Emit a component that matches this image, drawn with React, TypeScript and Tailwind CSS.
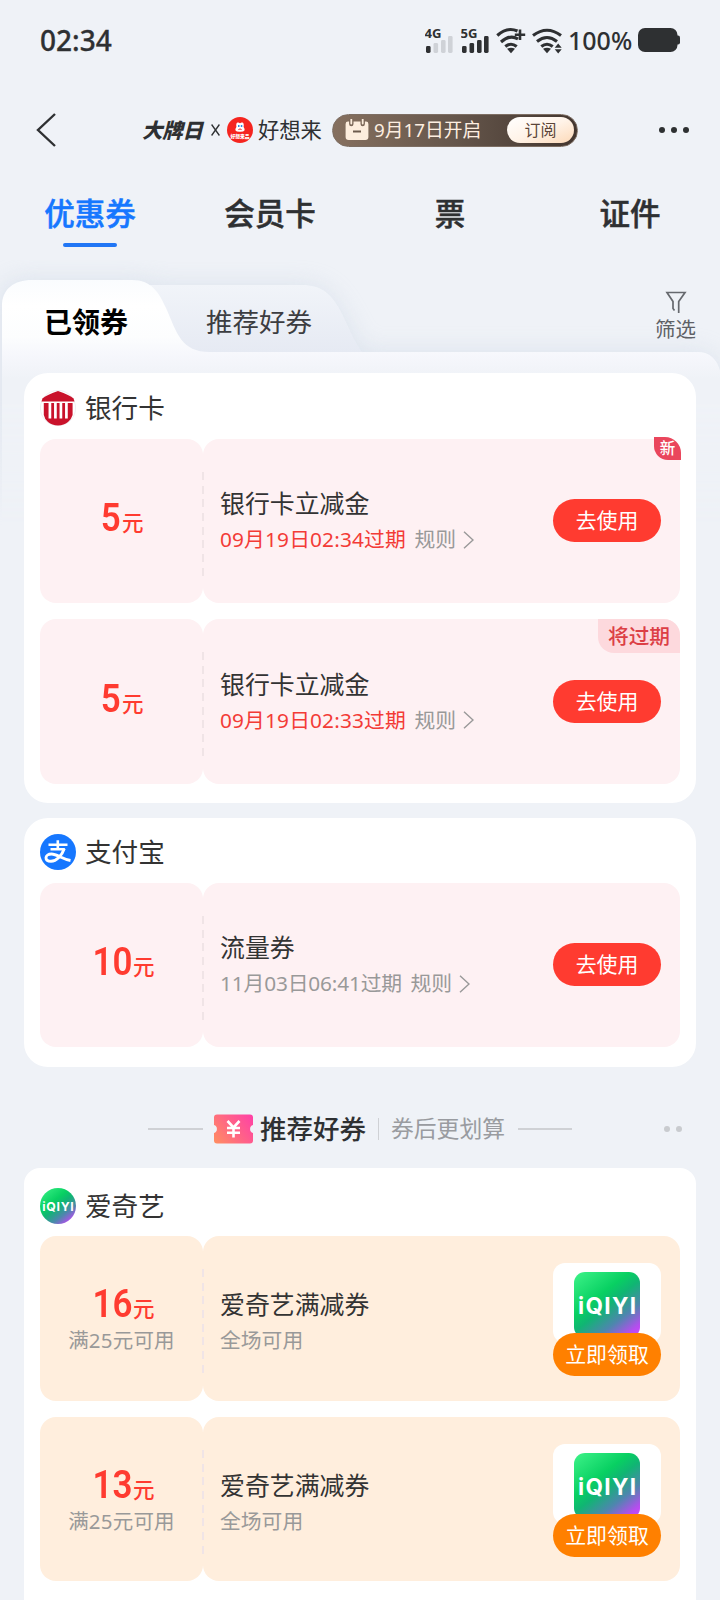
import { ReactNode } from "react";
import clsx from "clsx";

type Coupon = {
  amount: string;
  condition?: string;
  title: string;
  expire?: string;
  expireSoon?: boolean;
  scope?: string;
  tag?: "new" | "expiring";
};

const BANK_COUPONS: Coupon[] = [
  { amount: "5", title: "银行卡立减金", expire: "09月19日02:34过期", expireSoon: true, tag: "new" },
  { amount: "5", title: "银行卡立减金", expire: "09月19日02:33过期", expireSoon: true, tag: "expiring" },
];

const ALIPAY_COUPONS: Coupon[] = [
  { amount: "10", title: "流量券", expire: "11月03日06:41过期" },
];

const IQIYI_COUPONS: Coupon[] = [
  { amount: "16", condition: "满25元可用", title: "爱奇艺满减券", scope: "全场可用" },
  { amount: "13", condition: "满25元可用", title: "爱奇艺满减券", scope: "全场可用" },
];

const TABS = ["优惠券", "会员卡", "票", "证件"];

function Signal({ label, level }: { label: string; level: number }) {
  const bars = [
    { x: 1, h: 7 },
    { x: 8.5, h: 10 },
    { x: 16, h: 13 },
    { x: 23, h: 17 },
  ];
  return (
    <svg width="29" height="28" viewBox="0 0 29 28">
      <text
        x="-0.5"
        y="12"
        fontSize="12.5"
        fontWeight="700"
        textLength="17"
        lengthAdjust="spacingAndGlyphs"
        fill="#2e3032"
        fontFamily="Noto Sans, sans-serif"
      >
        {label}
      </text>
      {bars.map((b, i) => (
        <rect key={b.x} x={b.x} y={27 - b.h} width="4.6" height={b.h} rx="1.4" fill={i < level ? "#2e3032" : "#cfd2d7"} />
      ))}
    </svg>
  );
}

function Wifi({ plus }: { plus?: boolean }) {
  return (
    <svg width="30" height="28" viewBox="0 0 30 28" fill="none" stroke="#2e3032" strokeWidth="3.1">
      <path d={plus ? "M1.3 9.5 Q11 0.5 21.5 5" : "M1 9.5 Q15 -1 29 9.5"} />
      <path d={plus ? "M5 16 Q14 8 22 13" : "M5 15.5 Q15 7.5 25 15.5"} />
      <path d="M9.3 20.5 Q15 16 20.7 20.5" />
      <path d="M11 22.8 Q15 20.5 19 22.8 L15 27.2Z" fill="#2e3032" stroke="none" />
      {plus ? (
        <path d="M24 3.5v10.5M18.8 8.8h10.4" strokeWidth="2.6" />
      ) : (
        <path d="M26.2 17.5l3.5 4.2h-7zM26.2 27.5l3.5-4.2h-7z" fill="#2e3032" stroke="none" />
      )}
    </svg>
  );
}

function StatusBar() {
  return (
    <div className="flex h-20 items-center pr-[40px] pl-[40px] text-[#2e3032]">
      <span className="text-[28px] leading-none font-medium [-webkit-text-stroke:0.3px_currentColor]">02:34</span>
      <div className="ml-auto flex items-center">
        <Signal label="4G" level={1} />
        <div className="w-[7px]" />
        <Signal label="5G" level={4} />
        <div className="w-[6px]" />
        <Wifi plus />
        <div className="w-[6px]" />
        <Wifi />
        <span className="ml-[6px] w-[65px] text-[25px] leading-none font-medium">100%</span>
        <svg className="ml-[5px]" width="42" height="24" viewBox="0 0 42 24" fill="#2e3032">
          <rect width="39.5" height="24" rx="7" />
          <rect x="37" y="7.5" width="5" height="9" rx="2" />
        </svg>
      </div>
    </div>
  );
}

function BrandLogo() {
  return (
    <svg width="26" height="26" viewBox="0 0 26 26">
      <circle cx="13" cy="13" r="13" fill="#f5251f" />
      <path d="M9.4 10 Q8.6 4.8 11.5 5.5 L13 6.3 L14.5 5.5 Q17.4 4.8 16.6 10 Q20 15 13 14.8 Q6 15 9.4 10Z" fill="#fff" />
      <path d="M11 9h1.5M13.8 9h1.5" stroke="#2d8be0" strokeWidth="1.8" />
      <path d="M11.4 12.6 Q13 11.3 14.6 12.6" stroke="#f5251f" strokeWidth="1" fill="none" />
      <text x="13" y="20.6" fontSize="4.8" fontWeight="900" fill="#fff" textAnchor="middle" fontFamily="Noto Sans CJK SC, sans-serif">
        好想来品
      </text>
    </svg>
  );
}

function TitleBar() {
  return (
    <div className="flex h-[100px] items-center pl-[36px] text-[#2e3032]">
      <svg width="20" height="34" viewBox="0 0 20 34" fill="none" stroke="#2e3032" strokeWidth="2.4">
        <path d="M19 1 L2 17 L19 33" />
      </svg>
      <span className="ml-[86px] w-[63px] text-[20.5px] leading-none font-black tracking-[-0.3px] italic">大牌日</span>
      <svg className="ml-[6px]" width="9" height="12" viewBox="0 0 9 12" stroke="#2e3032" strokeWidth="1.3">
        <path d="M0.6 0.5 L8.4 11.5 M8.4 0.5 L0.6 11.5" />
      </svg>
      <div className="ml-[7px]">
        <BrandLogo />
      </div>
      <span className="ml-[5px] w-[66px] text-[21.3px] leading-none">好想来</span>
      <div className="ml-[8px] flex h-[33px] w-[246px] items-center rounded-full border border-[#7d6e63] bg-linear-to-r from-[#86705f] via-[#65564b] to-[#43362f] pr-[3px] pl-[12px]">
        <svg width="24" height="22" viewBox="0 0 24 22">
          <path d="M3 2.5h18a2.4 2.4 0 0 1 2.4 2.4V18a3 3 0 0 1-3 3H3.6a3 3 0 0 1-3-3V4.9A2.4 2.4 0 0 1 3 2.5z" fill="#fdeddd" />
          <path d="M6.3 0v5M17.7 0v5" stroke="#7b6758" strokeWidth="4.4" strokeLinecap="round" />
          <path d="M6.3 0v4.5M17.7 0v4.5" stroke="#fdeddd" strokeWidth="1.8" strokeLinecap="round" />
          <path d="M8 12.5h8" stroke="#6d5a4c" strokeWidth="2" />
        </svg>
        <span className="ml-[5px] text-[18.8px] leading-none whitespace-nowrap text-[#fdeee0]">9月17日开启</span>
        <span className="ml-auto flex h-[26px] w-[67px] items-center justify-center rounded-full bg-linear-to-br from-white via-[#fff3e8] to-[#fcd9b8] text-[16px] leading-none text-[#5b4538]">
          订阅
        </span>
      </div>
      <div className="ml-[81px] flex gap-[6px]">
        <i className="size-[6px] rounded-full bg-[#2e3032]" />
        <i className="size-[6px] rounded-full bg-[#2e3032]" />
        <i className="size-[6px] rounded-full bg-[#2e3032]" />
      </div>
    </div>
  );
}

function MainTabs() {
  return (
    <div className="grid h-20 grid-cols-4">
      {TABS.map((tab, i) => (
        <div key={tab} className="flex flex-col items-center pt-[15px]">
          <span
            className={clsx(
              "text-[30.5px] leading-[36px] font-medium [-webkit-text-stroke:0.5px_currentColor]",
              i === 0 ? "text-[#1677ff]" : "text-[#2e3032]"
            )}
          >
            {tab}
          </span>
          {i === 0 && <i className="mt-[12px] h-[3.5px] w-[54px] rounded-full bg-[#2176f5]" />}
        </div>
      ))}
    </div>
  );
}

// Folder-shaped backdrop: inactive tab behind, active tab joined to the panel.
function FolderShape() {
  return (
    <svg className="absolute top-0 left-0 -z-10" width="720" height="280" viewBox="0 0 720 280">
      <defs>
        <linearGradient id="front" x1="0" y1="20" x2="0" y2="280" gradientUnits="userSpaceOnUse">
          <stop offset="0" stopColor="#fafcfe" />
          <stop offset="0.1" stopColor="#ffffff" />
          <stop offset="0.22" stopColor="#fcfdfe" />
          <stop offset="0.29" stopColor="#f6f7fc" />
          <stop offset="0.38" stopColor="#eff2f7" />
          <stop offset="1" stopColor="#eff2f7" />
        </linearGradient>
        <linearGradient id="back" x1="0" y1="25" x2="0" y2="92" gradientUnits="userSpaceOnUse">
          <stop offset="0" stopColor="#f1f4f9" />
          <stop offset="1" stopColor="#e6eaf3" />
        </linearGradient>
        <linearGradient id="fade" x1="0" y1="0" x2="0" y2="280" gradientUnits="userSpaceOnUse">
          <stop offset="0" stopColor="#fff" />
          <stop offset="0.5" stopColor="#fff" />
          <stop offset="0.95" stopColor="#000" />
        </linearGradient>
        <mask id="bottomFade">
          <rect width="720" height="280" fill="url(#fade)" />
        </mask>
        <filter id="soft" x="-20%" y="-20%" width="140%" height="140%" colorInterpolationFilters="sRGB">
          <feGaussianBlur stdDeviation="12" />
        </filter>
      </defs>
      <g mask="url(#bottomFade)">
        <g fill="#bccadd" opacity="0.38" filter="url(#soft)">
          <path d="M0 290 V44 C0 26 12 20 28 20 H132 C150 20 155 25 158 25 H300 C325 25 332 38 342 54 L362 92 H696 C712 94 720 104 722 118 V290Z" />
        </g>
        <path d="M140 92 V25 H302 C322 25 331 34 340 50 C348 65 353 80 362 92Z" fill="url(#back)" />
        <path
          d="M2 290 V46 C2 29 14 20 32 20 H132 C152 20 159 33 166 48 C177 73 181 92 210 92 H698 C711 92 719 101 721 116 V290Z"
          fill="url(#front)"
        />
      </g>
    </svg>
  );
}

function SubTabs() {
  return (
    <div className="relative z-0 flex h-[113px]">
      <FolderShape />
      <span className="mt-[44px] ml-[44px] w-[90px] text-[28px] leading-[36px] font-bold text-black">已领券</span>
      <span className="mt-[43.5px] ml-[72px] text-[26.5px] leading-[36px] text-[#3c3d41]">推荐好券</span>
      <div className="mt-[31px] mr-[24px] ml-auto flex flex-col items-center text-[#5e6166]">
        <svg width="22" height="23" viewBox="0 0 22 23" fill="none" stroke="#66696e" strokeWidth="1.7">
          <path d="M9.5 19.5 L8 17.5 V10.5 L2 1.5 H20 L13.7 10.5 V22" />
        </svg>
        <span className="mt-[2px] text-[20.5px] leading-[26px]">筛选</span>
      </div>
    </div>
  );
}

function BankIcon() {
  return (
    <svg width="36" height="36" viewBox="0 0 36 36">
      <circle cx="18" cy="18" r="17.6" fill="#fff" stroke="#e8eaec" strokeWidth="0.7" />
      <path d="M18 1 Q30 5 33.5 8.5 L34.5 11.5 H1.5 L2.5 8.5 Q6 5 18 1Z" fill="#c9122b" />
      <path d="M3.8 13 H32.6 V25 Q31.500 29 28 32 Q24 35.400 18 35.400 Q12 35.400 8 32 Q4.500 29 3.800 25Z" fill="#c9122b" />
      <path d="M9.900 12v16.500M15.400 12v16.500M20.900 12v16.500M26.400 12v16.500" stroke="#fff" strokeWidth="2.700" />
    </svg>
  );
}

function AlipayIcon() {
  return (
    <svg width="36" height="36" viewBox="0 0 36 36" fill="none">
      <circle cx="18" cy="18" r="18" fill="#1677ff" />
      <g stroke="#fff" strokeWidth="2.6">
        <path d="M8.5 10.7h19M17.8 6.2v9M10.5 15.3h14.3" />
        <path d="M24.3 14.5 C22 21.5 16.5 27.3 11 27.3 C7.8 27.3 6 25.8 6 23.8 C6 21.6 8.3 20 11.5 20 C17 20 22 25 30.5 26.5" strokeWidth="2.9" />
      </g>
    </svg>
  );
}

function IqiyiLogo({ id, size, round }: { id: string; size: number; round?: boolean }) {
  return (
    <svg width={size} height={size} viewBox="0 0 66 66">
      <defs>
        <linearGradient id={id} x1="8" y1="0" x2="60" y2="66" gradientUnits="userSpaceOnUse">
          <stop offset="0" stopColor="#36ee83" />
          <stop offset="0.35" stopColor="#08d062" />
          <stop offset="0.5" stopColor="#10b573" />
          <stop offset="0.72" stopColor="#4e86ae" />
          <stop offset="0.92" stopColor="#b84cf0" />
          <stop offset="1" stopColor="#c648fa" />
        </linearGradient>
      </defs>
      <rect width="66" height="66" rx={round ? 33 : 11} fill={`url(#${id})`} />
      <text
        x="4"
        y="41.5"
        fontSize="22.5"
        fontWeight="700"
        textLength="58"
        lengthAdjust="spacing"
        fill="#fff"
        fontFamily="Inter, sans-serif"
      >
        iQIYI
      </text>
    </svg>
  );
}

function Chevron() {
  return (
    <svg width="11" height="18" viewBox="0 0 11 18" fill="none" stroke="#999" strokeWidth="1.4">
      <path d="M1 0.7 L10 9 L1 17.3" />
    </svg>
  );
}

function CouponTag({ tag }: { tag: Coupon["tag"] }) {
  if (tag === "new") {
    return (
      <span className="absolute -top-[1.5px] -right-[1px] flex h-[23px] w-[27px] items-center justify-center rounded-tr-[16px] rounded-bl-[14px] bg-[#ea465c] text-[15.5px] leading-none font-medium text-white">
        新
      </span>
    );
  }
  if (tag === "expiring") {
    return (
      <span className="absolute top-0 right-0 flex h-[34px] w-[82px] items-center justify-center rounded-tr-[16px] rounded-bl-[16px] bg-[#fdd9dd] text-[20.7px] leading-none font-medium text-[#dc3f45]">
        将过期
      </span>
    );
  }
  return null;
}

function CouponCard({ coupon, id, promo }: { coupon: Coupon; id: string; promo?: boolean }) {
  const bg = promo ? "bg-[#ffeedd]" : "bg-[#fef1f3]";
  return (
    <div className="relative flex h-[164.5px]">
      <div className={clsx("flex w-[163px] flex-col items-center justify-center rounded-2xl", promo && "pt-[4px]", bg)}>
        <div className="flex items-baseline text-[#ff3b30]">
          <span className="origin-right scale-x-92 font-[Roboto] text-[38px] leading-[40px] font-semibold">{coupon.amount}</span>
          <span className="ml-px text-[21.5px] leading-[40px] font-medium">元</span>
        </div>
        {coupon.condition && (
          <span className="-mt-[5px] text-[20.5px] leading-[32px] tracking-[0.2px] text-[#999]">{coupon.condition}</span>
        )}
      </div>
      <div className={clsx("flex flex-1 items-center rounded-2xl pr-[19px] pl-[17px]", bg)}>
        <div className={clsx("flex-1", promo ? "pt-[9px]" : "pt-[1.5px]")}>
          <div className="text-[24.9px] leading-[36px] text-[#333]">{coupon.title}</div>
          <div className="flex h-[37px] items-center text-[20.8px] leading-[37px] whitespace-nowrap text-[#999]">
            {coupon.expire && (
              <>
                <span className={clsx("mr-[8.5px]", coupon.expireSoon ? "tracking-[0.15px] text-[#f33b36]" : "tracking-[-0.15px]")}>
                  {coupon.expire}
                </span>
                <span>规则</span>
                <span className="ml-[7px]">
                  <Chevron />
                </span>
              </>
            )}
            {coupon.scope}
          </div>
        </div>
        {promo ? (
          <div className="flex w-[108px] flex-col items-center pt-[3px]">
            <div className="flex h-[80px] w-full justify-center rounded-xl bg-white pt-[9px]">
              <IqiyiLogo id={id} size={66} />
            </div>
            <button className="relative -mt-[10px] h-[43px] w-full rounded-full bg-[#ff8000] text-[20.9px] leading-none text-white">
              立即领取
            </button>
          </div>
        ) : (
          <button className="h-[43px] w-[108px] rounded-full bg-[#ff3b30] text-[20.9px] leading-none text-white">去使用</button>
        )}
      </div>
      <i className="absolute top-[33px] left-[162px] h-[105px] w-[2px] bg-[repeating-linear-gradient(to_bottom,#f0e4e6_0_8px,transparent_8px_13.7px)]" />
      <CouponTag tag={coupon.tag} />
    </div>
  );
}

function CouponGroup(props: { icon: ReactNode; name: string; coupons: Coupon[]; promo?: boolean; className: string }) {
  return (
    <section className={clsx("mx-6 bg-white px-4", props.className)}>
      <div className="flex h-9 items-center gap-[9px]">
        {props.icon}
        <h2 className="text-[26.6px] leading-[36px] text-[#333]">{props.name}</h2>
      </div>
      <div className="mt-[12.5px] flex flex-col gap-4">
        {props.coupons.map((c, i) => (
          <CouponCard key={i} coupon={c} id={`logo-${i}`} promo={props.promo} />
        ))}
      </div>
    </section>
  );
}

function RecommendTitle() {
  return (
    <div className="flex h-[101px] items-center pt-[24px] pl-[148px]">
      <i className="h-[2px] w-[55px] bg-[#cfd1d5]" />
      <svg className="ml-[11px]" width="39" height="30" viewBox="0 0 39 30">
        <defs>
          <linearGradient id="ticket" x1="0" y1="30" x2="39" y2="0" gradientUnits="userSpaceOnUse">
            <stop offset="0" stopColor="#ff9060" />
            <stop offset="0.5" stopColor="#ff6585" />
            <stop offset="1" stopColor="#ff3fa8" />
          </linearGradient>
        </defs>
        <path
          d="M3 0.5h33a3 3 0 0 1 3 3V11a4.2 4.2 0 0 0 0 8v7.5a3 3 0 0 1-3 3H3a3 3 0 0 1-3-3V19a4.2 4.2 0 0 0 0-8V3.5a3 3 0 0 1 3-3z"
          fill="url(#ticket)"
        />
        <path d="M13.5 7 L19.5 13.5 L25.5 7 M19.5 13.5V23.5 M13 14h13 M13 18.7h13" stroke="#fff" strokeWidth="2.6" fill="none" />
      </svg>
      <span className="ml-[7px] w-[107px] text-[26.5px] leading-[36px] font-medium whitespace-nowrap text-[#2e3032]">
        推荐好券
      </span>
      <i className="ml-[11px] h-[22px] w-px bg-[#cfd1d5]" />
      <span className="ml-[12px] w-[115px] text-[22.8px] leading-[36px] whitespace-nowrap text-[#999ba0]">券后更划算</span>
      <i className="ml-[12px] h-[2px] w-[54px] bg-[#cfd1d5]" />
      <i className="ml-[92px] size-[6px] rounded-full bg-[#c9cbcf]" />
      <i className="ml-[6px] size-[6px] rounded-full bg-[#c9cbcf]" />
    </div>
  );
}

export default function App() {
  return (
    <div className="h-[1600px] w-[720px] overflow-hidden bg-[#eff2f7] font-['Noto_Sans','Noto_Sans_CJK_SC',sans-serif]">
      <StatusBar />
      <TitleBar />
      <MainTabs />
      <SubTabs />
      <div className="relative">
        <CouponGroup icon={<BankIcon />} name="银行卡" coupons={BANK_COUPONS} className="rounded-3xl pt-[17px] pb-[19px]" />
        <CouponGroup
          icon={<AlipayIcon />}
          name="支付宝"
          coupons={ALIPAY_COUPONS}
          className="mt-[15.5px] rounded-3xl pt-4 pb-[19.5px]"
        />
        <RecommendTitle />
        <CouponGroup
          icon={<IqiyiLogo id="logo-head" size={36} round />}
          name="爱奇艺"
          coupons={IQIYI_COUPONS}
          promo
          className="rounded-t-2xl pt-[20px] pb-[40px]"
        />
      </div>
    </div>
  );
}
